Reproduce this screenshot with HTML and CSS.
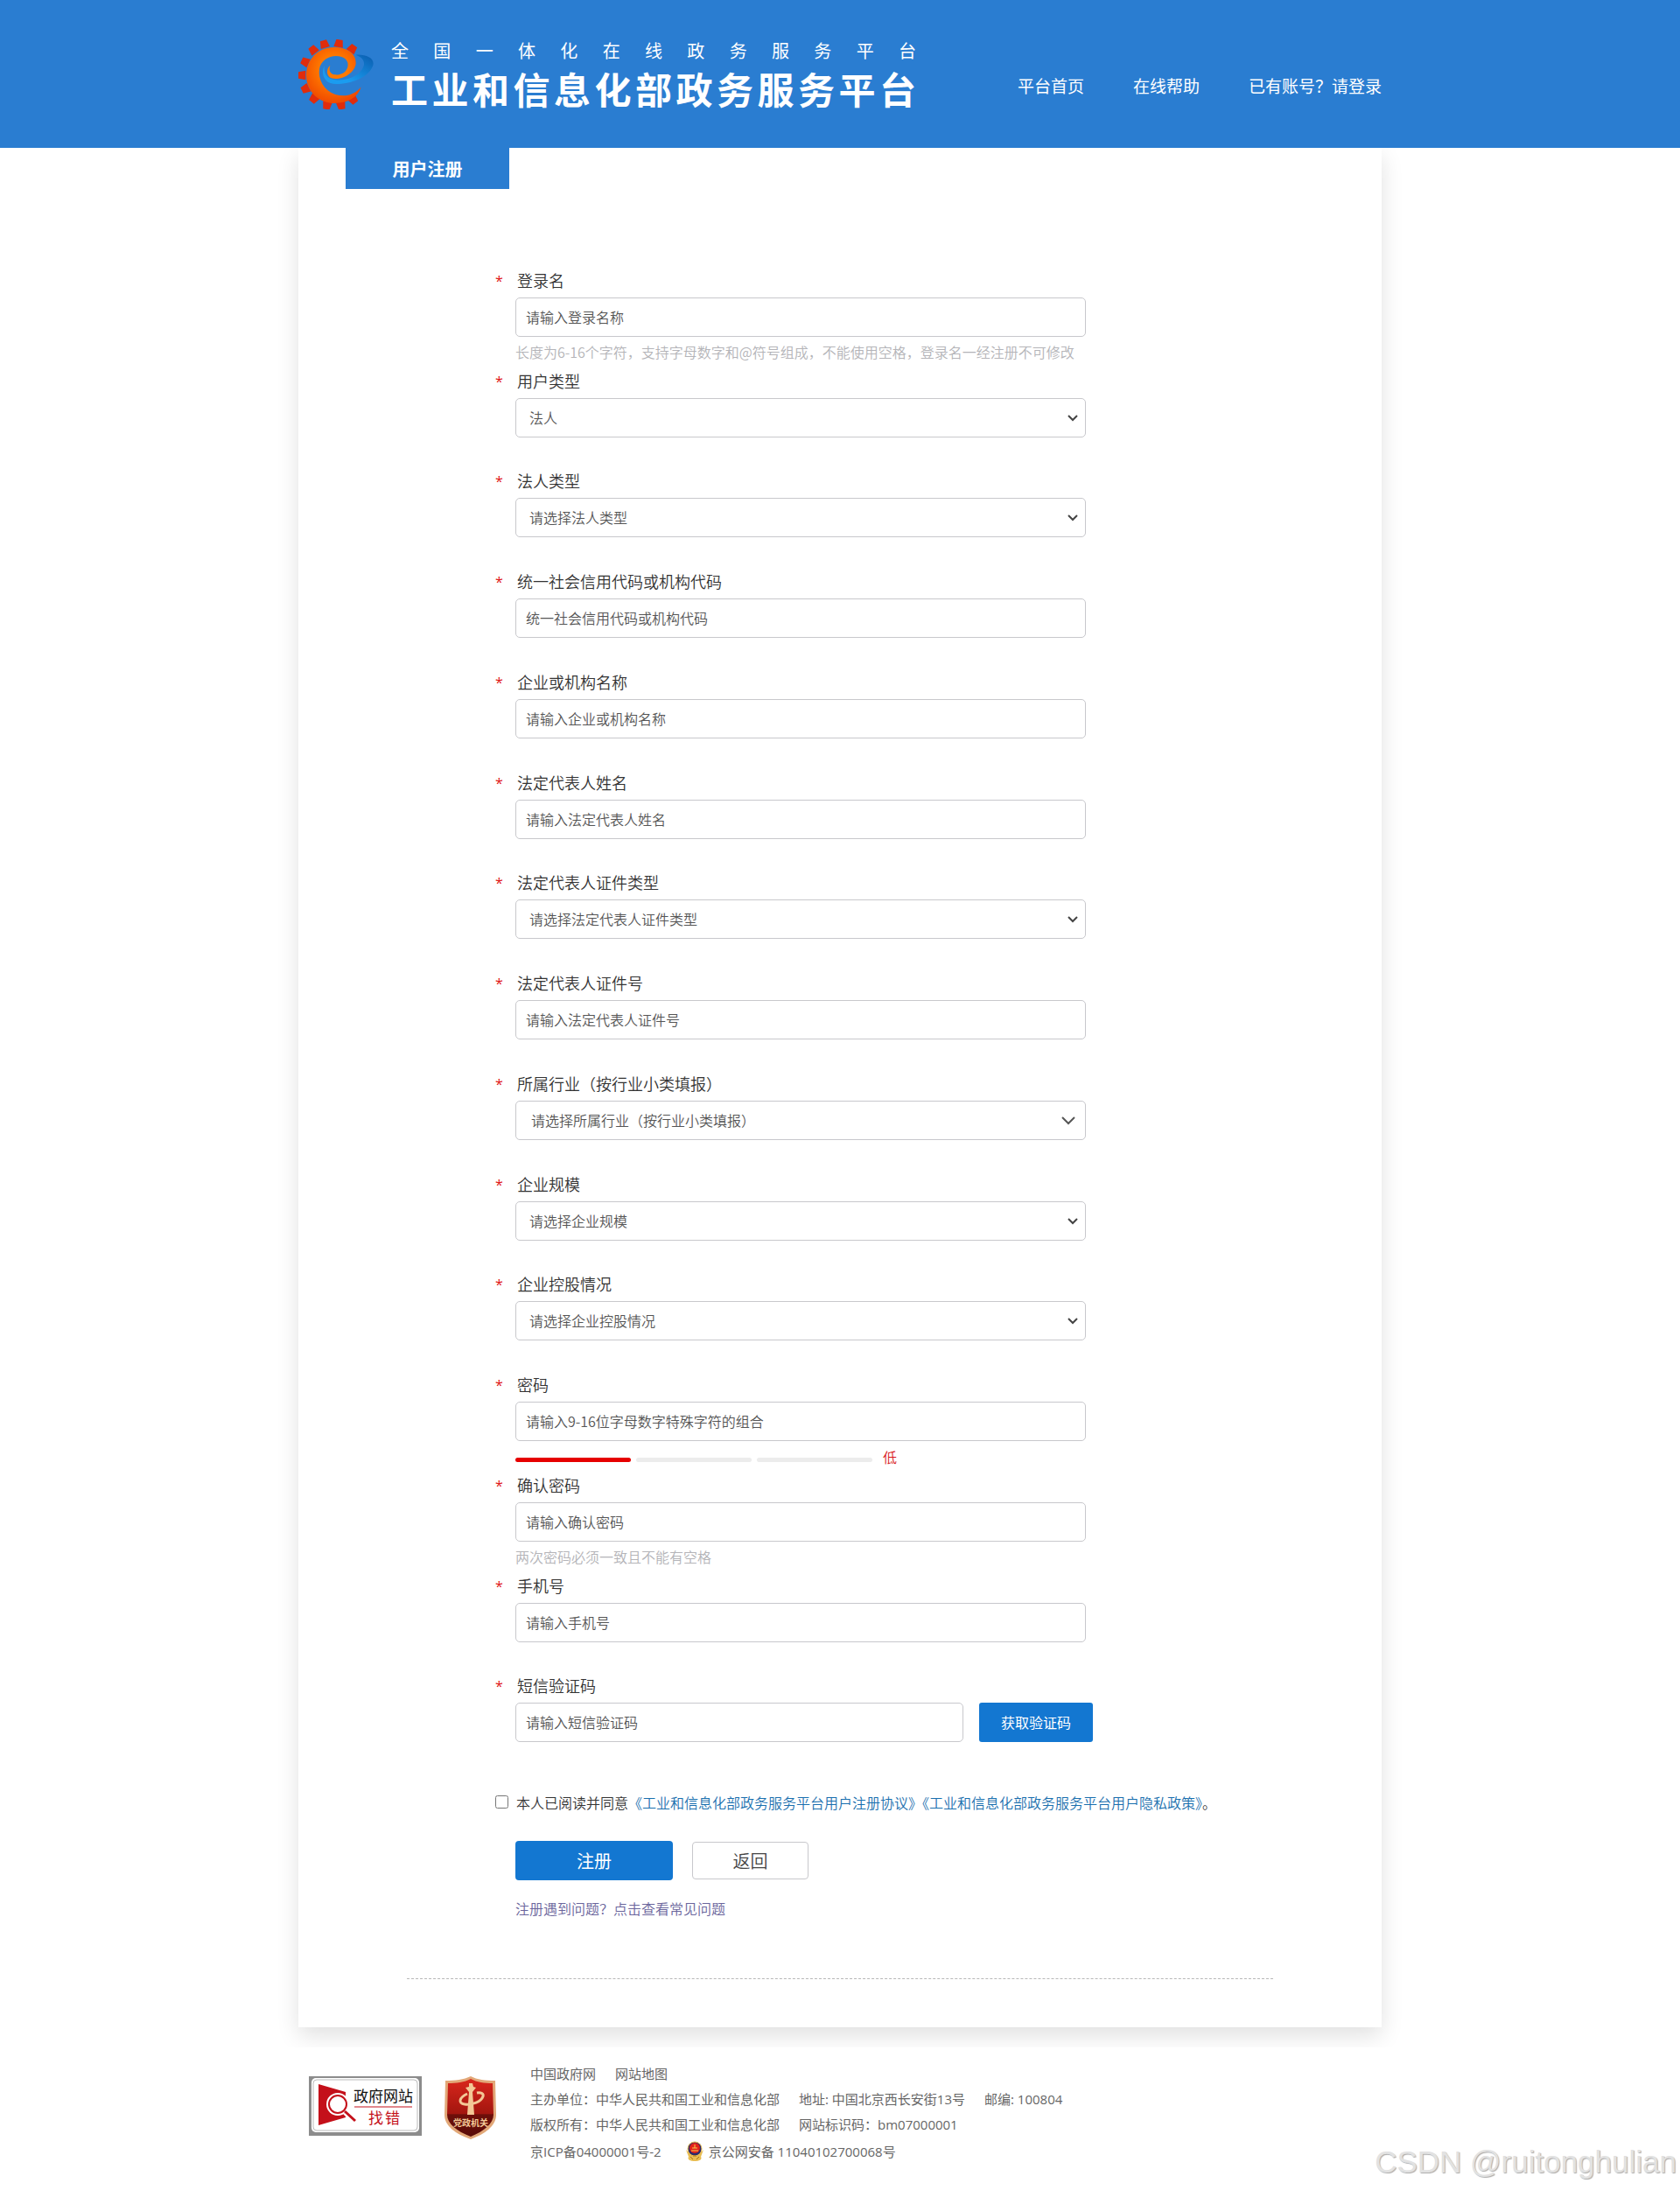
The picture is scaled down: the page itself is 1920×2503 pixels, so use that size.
FILE: index.html
```html
<!DOCTYPE html>
<html lang="zh-CN">
<head>
    <meta charset="UTF-8">
    <meta name="viewport" content="width=device-width, initial-scale=1.0">
    <title>用户注册</title>
    <link rel="stylesheet" href="styles.css">
</head>
<body>

    <header class="header">
        <div class="container header-inner">
            <div class="logo">
                <svg class="logo-icon" viewBox="21 15 258 240" aria-hidden="true">
                    <defs>
                        <radialGradient id="orange" cx="0.5" cy="0.4" r="0.6">
                            <stop offset="0.4" stop-color="#ff7a00"/>
                            <stop offset="1" stop-color="#f04a00"/>
                        </radialGradient>
                        <linearGradient id="blue" x1="0" y1="1" x2="1" y2="0">
                            <stop offset="0.3" stop-color="#1a9cf0"/>
                            <stop offset="1" stop-color="#0a5cae"/>
                        </linearGradient>
                        <path id="tooth" d="M-16 13L-11 -13H11L16 13Z"/>
                    </defs>
                    <g fill="#e02c0c">
                        <use href="#tooth" transform="translate(110 31) rotate(-16)"/>
                        <use href="#tooth" transform="translate(160 29) rotate(10)"/>
                        <use href="#tooth" transform="translate(206 47) rotate(36)"/>
                        <use href="#tooth" transform="translate(72 51) rotate(-38)"/>
                        <use href="#tooth" transform="translate(44 92) rotate(-65)"/>
                        <use href="#tooth" transform="translate(33 138) rotate(-90)"/>
                        <use href="#tooth" transform="translate(45 185) rotate(-116)"/>
                        <use href="#tooth" transform="translate(74 219) rotate(-141)"/>
                        <use href="#tooth" transform="translate(119 242) rotate(-169)"/>
                        <use href="#tooth" transform="translate(168 242) rotate(168)"/>
                        <use href="#tooth" transform="translate(209 222) rotate(142)"/>
                    </g>
                    <path fill="url(#blue)" d="M110 106C96 136 112 168 150 168C200 168 262 146 277 104C283 80 255 66 218 68C246 78 254 98 238 120C220 144 180 158 148 154C118 150 108 132 110 106Z"/>
                    <path fill="url(#orange)" d="M236 178C214 206 180 214 148 204C108 190 88 152 93 116C98 88 124 72 150 72C178 72 196 88 190 110C184 130 164 138 146 136C130 134 124 122 130 104C116 116 116 140 134 148C166 158 214 132 218 98C220 62 186 42 144 42C86 42 48 86 48 140C50 196 92 234 146 234C190 234 226 214 236 178Z"/>
                </svg>
                <div class="logo-text">
                    <p class="logo-sub">全国一体化在线政务服务平台</p>
                    <h1 class="logo-title">工业和信息化部政务服务平台</h1>
                </div>
            </div>
            <nav class="nav">
                <a href="#">平台首页</a>
                <a href="#">在线帮助</a>
                <a href="#">已有账号？请登录</a>
            </nav>
        </div>
    </header>

    <main class="container card">
        <h2 class="tab">用户注册</h2>

        <form class="form">
            <div class="field">
                <span class="star">*</span>
                <label for="loginName">登录名</label>
                <input class="control" type="text" id="loginName" placeholder="请输入登录名称">
                <p class="tip">长度为6-16个字符，支持字母数字和@符号组成，不能使用空格，登录名一经注册不可修改</p>
            </div>
            <div class="field field-short">
                <span class="star">*</span>
                <label for="userType">用户类型</label>
                <select class="control" id="userType">
                    <option>法人</option>
                </select>
            </div>
            <div class="field">
                <span class="star">*</span>
                <label for="corpType">法人类型</label>
                <select class="control" id="corpType">
                    <option>请选择法人类型</option>
                </select>
            </div>
            <div class="field">
                <span class="star">*</span>
                <label for="corpCode">统一社会信用代码或机构代码</label>
                <input class="control" type="text" id="corpCode" placeholder="统一社会信用代码或机构代码">
            </div>
            <div class="field">
                <span class="star">*</span>
                <label for="corpName">企业或机构名称</label>
                <input class="control" type="text" id="corpName" placeholder="请输入企业或机构名称">
            </div>
            <div class="field field-short">
                <span class="star">*</span>
                <label for="legalName">法定代表人姓名</label>
                <input class="control" type="text" id="legalName" placeholder="请输入法定代表人姓名">
            </div>
            <div class="field">
                <span class="star">*</span>
                <label for="certType">法定代表人证件类型</label>
                <select class="control" id="certType">
                    <option>请选择法定代表人证件类型</option>
                </select>
            </div>
            <div class="field">
                <span class="star">*</span>
                <label for="certNo">法定代表人证件号</label>
                <input class="control" type="text" id="certNo" placeholder="请输入法定代表人证件号">
            </div>
            <div class="field">
                <span class="star">*</span>
                <label for="industry">所属行业（按行业小类填报）</label>
                <select class="control control-tree" id="industry">
                    <option>请选择所属行业（按行业小类填报）</option>
                </select>
            </div>
            <div class="field field-short">
                <span class="star">*</span>
                <label for="scale">企业规模</label>
                <select class="control" id="scale">
                    <option>请选择企业规模</option>
                </select>
            </div>
            <div class="field">
                <span class="star">*</span>
                <label for="holding">企业控股情况</label>
                <select class="control" id="holding">
                    <option>请选择企业控股情况</option>
                </select>
            </div>
            <div class="field">
                <span class="star">*</span>
                <label for="password">密码</label>
                <input class="control" type="password" id="password" placeholder="请输入9-16位字母数字特殊字符的组合">
                <div class="strength">
                    <span class="bar bar-on"></span>
                    <span class="bar"></span>
                    <span class="bar"></span>
                    <span class="strength-text">低</span>
                </div>
            </div>
            <div class="field">
                <span class="star">*</span>
                <label for="password2">确认密码</label>
                <input class="control" type="password" id="password2" placeholder="请输入确认密码">
                <p class="tip">两次密码必须一致且不能有空格</p>
            </div>
            <div class="field field-short">
                <span class="star">*</span>
                <label for="mobile">手机号</label>
                <input class="control" type="text" id="mobile" placeholder="请输入手机号">
            </div>
            <div class="field">
                <span class="star">*</span>
                <label for="smsCode">短信验证码</label>
                <div class="sms">
                    <input class="control" type="text" id="smsCode" placeholder="请输入短信验证码">
                    <button class="btn-code" type="button">获取验证码</button>
                </div>
            </div>

            <div class="agree">
                <input type="checkbox" id="agree">
                <p><label for="agree">本人已阅读并同意</label><a href="#">《工业和信息化部政务服务平台用户注册协议》</a><a href="#">《工业和信息化部政务服务平台用户隐私政策》</a>。</p>
            </div>

            <div class="actions">
                <button class="btn-submit" type="submit">注册</button>
                <button class="btn-back" type="button">返回</button>
            </div>
            <a class="faq" href="#">注册遇到问题？点击查看常见问题</a>
        </form>

        <hr class="line">
    </main>

    <footer class="footer">
        <div class="container footer-inner">
            <a class="badge" href="#">
                <svg width="129" height="68" viewBox="0 0 129 68" role="img" aria-label="政府网站找错">
                    <rect width="129" height="68" fill="#8c8c8c"/>
                    <rect x="3" y="2" width="123" height="62" rx="5" fill="#fff"/>
                    <rect x="5" y="4" width="119" height="58" rx="4" fill="#fff" stroke="#bbb"/>
                    <path d="M11 9L42 18V47L11 56Z" fill="#c4101a"/>
                    <circle cx="33" cy="32" r="13" fill="#fff"/>
                    <circle cx="33" cy="32" r="10" fill="#fff" stroke="#c4101a" stroke-width="2"/>
                    <path d="M42 41L53 52" stroke="#fff" stroke-width="7"/>
                    <path d="M41 40L53 51" stroke="#c4101a" stroke-width="3"/>
                    <path d="M52 35H118" stroke="#c4101a"/>
                    <text class="badge-black" x="51" y="29">政府网站</text>
                    <text class="badge-red" x="68" y="54">找</text>
                    <text class="badge-red" x="87" y="54">错</text>
                </svg>
            </a>
            <a class="badge" href="#">
                <svg width="59" height="72" viewBox="0 0 59 72" role="img" aria-label="党政机关">
                    <defs>
                        <linearGradient id="shield" x1="0" y1="0" x2="0" y2="1">
                            <stop offset="0" stop-color="#d9261c"/>
                            <stop offset="0.6" stop-color="#a3160f"/>
                            <stop offset="0.62" stop-color="#6d0f0a"/>
                            <stop offset="1" stop-color="#5a0c08"/>
                        </linearGradient>
                    </defs>
                    <path d="M30 0C37 4 47 5 58 5L59 44C59 57 46 66 30 72C13 66 0 57 0 44L1 5C12 5 22 4 30 0Z" fill="#e2a878"/>
                    <path d="M30 3C37 7 46 8 55 8L56 44C56 54 45 63 30 69C14 63 3 54 3 44L4 8C13 8 23 7 30 3Z" fill="url(#shield)"/>
                    <path d="M26 44L28 18L24 13L28 12V8H32L33 12L36 13L32 18L34 44Z" fill="#f3c896"/>
                    <path d="M26 20C17 24 15 31 23 32C32 33 42 29 44 23C45 20 42 18 37 19" fill="none" stroke="#f3c896" stroke-width="3"/>
                    <text class="badge-gold" x="10" y="57">党政机关</text>
                </svg>
            </a>
            <div class="info">
                <p class="info-row info-links"><a href="#">中国政府网</a><a href="#">网站地图</a></p>
                <p class="info-row"><span>主办单位：中华人民共和国工业和信息化部</span><span>地址: 中国北京西长安街13号</span><span>邮编: 100804</span></p>
                <p class="info-row"><span>版权所有：中华人民共和国工业和信息化部</span><span>网站标识码：bm07000001</span></p>
                <p class="info-row info-icp">
                    <a href="#">京ICP备04000001号-2</a>
                    <a class="police" href="#">
                        <svg width="20" height="24" viewBox="0 0 20 24" aria-hidden="true">
                            <path d="M0 10L3 18C1 21 5 23 10 23C15 23 19 21 17 18L20 10L14 16H6Z" fill="#e9bd52"/>
                            <circle cx="10" cy="9" r="8" fill="#2b2a6b" stroke="#e9bd52"/>
                            <circle cx="10" cy="8" r="6" fill="#e2231a"/>
                            <path d="M7 8H13M6 11H14M10 4V8" stroke="#f5cf4b"/>
                            <path d="M5 18L8 21M15 18L12 21M8 17H12" stroke="#a87412"/>
                        </svg>
                        京公网安备 11040102700068号
                    </a>
                </p>
            </div>
        </div>
        <div class="watermark">CSDN @ruitonghulian</div>
    </footer>

</body>
</html>
```
FILE: styles.css
```css
* {
    box-sizing: border-box;
}

body {
    margin: 0;
    font-family: "Noto Sans CJK SC", sans-serif;
    font-weight: 350;
    font-size: 16px;
    line-height: 24px;
    color: #333;
    background: #fff;
}

h1, h2, p {
    margin: 0;
}

a {
    text-decoration: none;
}

input, select, button {
    font-family: inherit;
    font-size: 16px;
    font-weight: inherit;
}

.container {
    width: 100%;
    max-width: 1238px;
    margin: 0 auto;
}

/* header */
.header {
    position: relative;
    background: #2a7dd1;
}

.header-inner {
    display: flex;
    align-items: center;
    justify-content: space-between;
    padding: 42px 0 42px;
}

.logo {
    display: flex;
    align-items: center;
    gap: 20px;
}

.logo-icon {
    width: 86px;
    height: 80px;
}

.logo-text {
    width: 600px;
    color: #fff;
    text-align: justify;
    text-align-last: justify;
}

.logo-sub {
    font-size: 20px;
    font-weight: 400;
    line-height: 32px;
}

.logo-title {
    font-size: 42px;
    font-weight: 700;
    line-height: 53px;
}

.nav {
    display: flex;
    gap: 56px;
    padding-top: 27px;
}

.nav a {
    font-size: 19px;
    font-weight: 400;
    color: #fff;
}

/* card */
.card {
    padding: 0 0 55px;
    background: #fff;
    box-shadow: 0 10px 24px rgba(0, 0, 0, 0.12);
}

.tab {
    width: 187px;
    margin-left: 54px;
    font-size: 20px;
    font-weight: 700;
    line-height: 47px;
    text-align: center;
    color: #fff;
    background: #2a7dd1;
}

.form {
    margin: 92px 0 0 224px;
}

.field {
    display: grid;
    grid-template-columns: 24px 652px;
    align-content: start;
    height: 115px;
}

.field-short {
    height: 114px;
}

.star {
    padding-left: 1px;
    font-family: "Open Sans", sans-serif;
    font-weight: 400;
    line-height: 26px;
    color: #e01414;
}

.field label {
    padding-left: 2px;
    font-size: 18px;
    line-height: 25px;
}

.control {
    grid-column: 2;
    width: 100%;
    height: 45px;
    margin-top: 6px;
    padding: 0 11px 2px;
    color: #555;
    background-color: #fff;
    border: 1px solid #c8c8cc;
    border-radius: 5px;
}

.control::placeholder {
    color: #555;
    opacity: 1;
}

select.control {
    padding: 0 15px 2px;
    appearance: none;
    background-image: url("data:image/svg+xml,%3Csvg xmlns='http://www.w3.org/2000/svg' width='14' height='10'%3E%3Cpath d='M2 2l5 5 5-5' fill='none' stroke='%23444' stroke-width='2'/%3E%3C/svg%3E");
    background-repeat: no-repeat;
    background-position: right 7px center;
}

select.control-tree {
    padding: 0 17px 2px;
    background-image: url("data:image/svg+xml,%3Csvg xmlns='http://www.w3.org/2000/svg' width='16' height='10'%3E%3Cpath d='M1 1l7 7 7-7' fill='none' stroke='%23555' stroke-width='2'/%3E%3C/svg%3E");
    background-position: right 11px center;
}

.tip {
    grid-column: 2;
    margin-top: 5px;
    color: #b4b4b8;
    white-space: nowrap;
}

.strength {
    grid-column: 2;
    display: flex;
    align-items: center;
    gap: 6px;
    margin-top: 6px;
}

.bar {
    width: 132px;
    height: 5px;
    margin-top: 6px;
    background: #ececec;
    border-radius: 3px;
}

.bar-on {
    background: #e60000;
}

.strength-text {
    margin-left: 6px;
    color: #d9181b;
}

.sms {
    grid-column: 2;
    display: flex;
    gap: 18px;
    width: 660px;
    margin-top: 6px;
}

.sms .control {
    flex: 1;
    margin-top: 0;
}

.btn-code {
    width: 130px;
    height: 45px;
    padding: 0 0 2px;
    font-weight: 400;
    color: #fff;
    background: #1377d1;
    border: 0;
    border-radius: 3px;
}

.agree {
    display: flex;
    align-items: flex-start;
    margin-top: 18px;
    line-height: 26px;
    white-space: nowrap;
}

.agree input {
    width: 15px;
    height: 15px;
    margin: 5px 9px 0 1px;
}

.agree a {
    color: #1a6fae;
}

.actions {
    display: flex;
    align-items: center;
    gap: 22px;
    margin: 31px 0 0 24px;
}

.btn-submit {
    width: 180px;
    height: 45px;
    font-size: 20px;
    font-weight: 400;
    color: #fff;
    background: #1377d1;
    border: 0;
    border-radius: 4px;
}

.btn-back {
    width: 133px;
    height: 43px;
    font-size: 20px;
    color: #444;
    background: #fff;
    border: 1px solid #c8c8cc;
    border-radius: 4px;
}

.faq {
    display: block;
    margin: 20px 0 0 24px;
    color: #6a659c;
}

.line {
    width: 80%;
    margin: 68px auto 0;
    border: 0;
    border-top: 1px dashed #b8b8b8;
}

/* footer */
.footer {
    position: relative;
    margin-top: 23px;
    background: #fff;
}

.footer-inner {
    display: flex;
    align-items: flex-start;
    padding: 16px 0 28px 12px;
}

.badge {
    margin: 17px 26px 0 0;
}

.badge svg {
    display: block;
}

.badge-black {
    font-size: 17px;
    font-weight: 400;
    fill: #111;
}

.badge-red {
    font-size: 17px;
    font-weight: 400;
    fill: #c4101a;
}

.badge-gold {
    font-size: 10px;
    font-weight: 700;
    fill: #f3c896;
}

.info {
    margin-left: 13px;
}

.info-row {
    display: flex;
    gap: 22px;
    font-family: "Open Sans", "Noto Sans CJK SC", sans-serif;
    font-size: 15px;
    font-weight: 400;
    line-height: 29px;
    color: #666;
}

.info-icp {
    gap: 28px;
    line-height: 32px;
}

.info-row a {
    color: #666;
}

.police {
    display: flex;
    align-items: center;
    gap: 6px;
}

.watermark {
    position: absolute;
    right: 4px;
    bottom: 12px;
    font-family: "Liberation Sans", Arial, sans-serif;
    font-size: 35px;
    line-height: 40px;
    color: #e2e2e2;
    text-shadow: 1px 1px 1px #aaa;
}
```
